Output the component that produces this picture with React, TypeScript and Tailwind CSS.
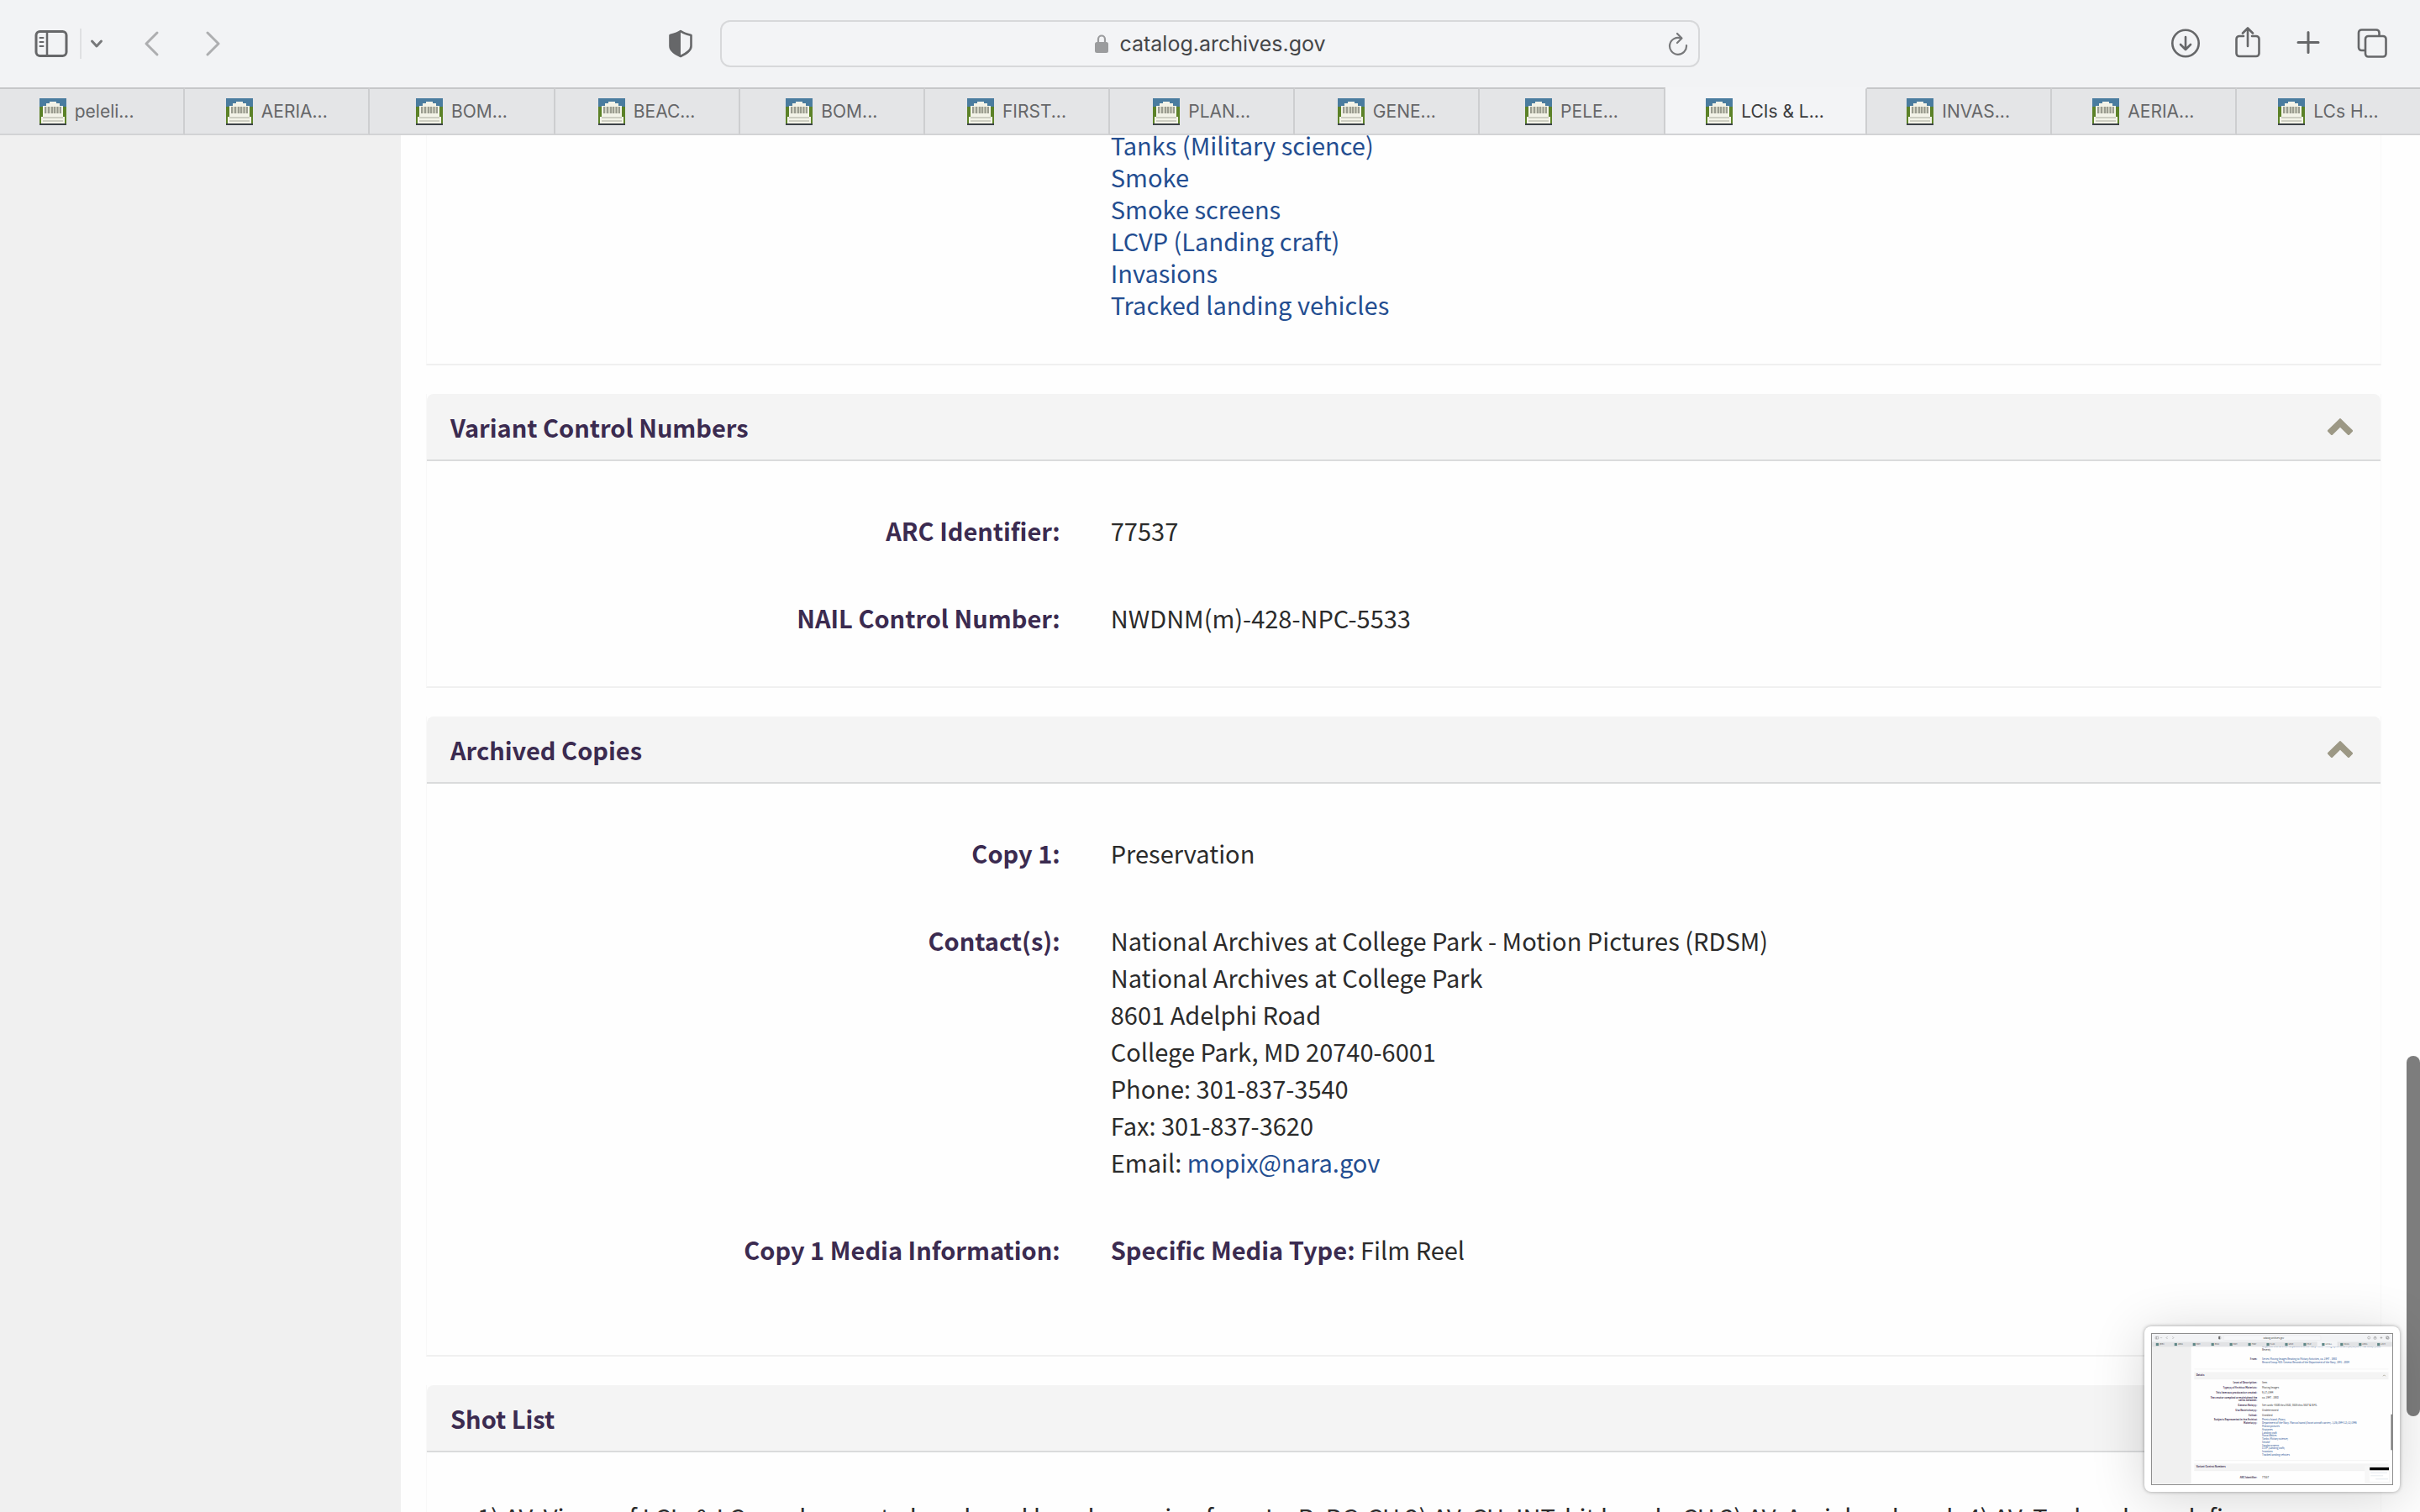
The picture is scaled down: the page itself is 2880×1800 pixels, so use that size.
import type { ReactNode } from 'react';
import { useState } from 'react';
import clsx from 'clsx';

const TABS = [
  'peleli...',
  'AERIA...',
  'BOM...',
  'BEAC...',
  'BOM...',
  'FIRST...',
  'PLAN...',
  'GENE...',
  'PELE...',
  'LCIs & L...',
  'INVAS...',
  'AERIA...',
  'LCs H...',
];

const SUBJECTS = [
  'Tanks (Military science)',
  'Smoke',
  'Smoke screens',
  'LCVP (Landing craft)',
  'Invasions',
  'Tracked landing vehicles',
];

const CONTACT = [
  'National Archives at College Park - Motion Pictures (RDSM)',
  'National Archives at College Park',
  '8601 Adelphi Road',
  'College Park, MD 20740-6001',
  'Phone: 301-837-3540',
  'Fax: 301-837-3620',
];

export default function App() {
  return (
    <div className="relative flex h-screen flex-col overflow-hidden bg-[#fefefe]">
      <header className="z-10 shrink-0 font-[Inter,sans-serif]">
        <Toolbar />
        <TabStrip />
      </header>
      <div className="flex min-h-0 flex-1 overflow-hidden">
        <aside className="w-[477px] shrink-0 bg-[#f0f0f0]" />
        <RecordPage />
        <Scrollbar />
      </div>
      <ScreenshotPreview />
    </div>
  );
}

function Toolbar() {
  return (
    <div className="grid h-[104px] grid-cols-[1fr_40.5%_1fr] items-center bg-[#f2f3f5] text-[#666769]">
      <div className="flex items-center pr-8 pl-[41px]">
        <button type="button" aria-label="Show sidebar">
          <svg className="h-8 w-10" viewBox="0 0 40 32" fill="none" stroke="currentColor">
            <rect x="2" y="1.500" width="36" height="29" rx="4.500" strokeWidth="3" />
            <path d="M15 2v28" strokeWidth="2.500" />
            <path d="M6.500 9h4M6.500 14h4M6.500 19h4" strokeWidth="2" strokeLinecap="round" />
          </svg>
        </button>
        <span className="ml-3.5 h-9 w-0.5 bg-[#dfe0e2]" />
        <button type="button" aria-label="Tab groups" className="ml-2.5">
          <svg className="h-4 w-4" viewBox="0 0 16 16" fill="none" stroke="#77787a" strokeWidth="3" strokeLinecap="round" strokeLinejoin="round">
            <path d="M2.500 5 8 11l5.500-6" />
          </svg>
        </button>
        <button type="button" aria-label="Back" className="ml-12">
          <svg className="h-8 w-5" viewBox="0 0 20 32" fill="none" stroke="#adaeb0" strokeWidth="3" strokeLinecap="round" strokeLinejoin="round">
            <path d="M16 3 3 16l13 13" />
          </svg>
        </button>
        <button type="button" aria-label="Forward" className="ml-[52px]">
          <svg className="h-8 w-5" viewBox="0 0 20 32" fill="none" stroke="#adaeb0" strokeWidth="3" strokeLinecap="round" strokeLinejoin="round">
            <path d="m4 3 13 13L4 29" />
          </svg>
        </button>
        <button type="button" aria-label="Privacy report" className="ml-auto">
          <svg className="h-[34px] w-[30px]" viewBox="0 0 30 34">
            <path
              d="M15 2C11 5 6.500 6 2.500 7v13c0 5.500 6.500 9 12.500 12 6-3 12.500-6.500 12.500-12V7C23.500 6 19 5 15 2Z"
              fill="none"
              stroke="currentColor"
              strokeWidth="2.600"
              strokeLinejoin="round"
            />
            <path d="M15 2C11 5 6.500 6 2.500 7v13c0 5.500 6.500 9 12.500 12Z" fill="currentColor" />
          </svg>
        </button>
      </div>

      <div className="relative flex h-14 items-center justify-center gap-3 rounded-xl border-2 border-[#d7d8da] bg-[#f3f4f6]">
        <svg className="h-6 w-[18px]" viewBox="0 0 18 24">
          <path d="M5 11V6.500a4 4 0 0 1 8 0V11" fill="none" stroke="#9b9c9e" strokeWidth="2.200" />
          <rect x="1" y="10" width="16" height="13" rx="2.500" fill="#9b9c9e" />
        </svg>
        <input
          type="text"
          aria-label="Address"
          defaultValue="catalog.archives.gov"
          className="field-sizing-content bg-transparent text-[25px] leading-8 text-[#454648] outline-none"
        />
        <button type="button" aria-label="Reload" className="absolute right-3">
          <svg className="h-7 w-6" viewBox="0 0 24 28" fill="none" stroke="#77787a" strokeWidth="2.200" strokeLinecap="round" strokeLinejoin="round">
            <path d="M15.500 7.500A10 10 0 1 0 22 16" />
            <path d="m11 2 5.500 5.500L11 13" />
          </svg>
        </button>
      </div>

      <div className="flex items-center justify-end pr-[39px]">
        <button type="button" aria-label="Downloads">
          <svg className="h-9 w-9" viewBox="0 0 36 36" fill="none" stroke="currentColor" strokeWidth="2.600" strokeLinecap="round" strokeLinejoin="round">
            <circle cx="18" cy="17.500" r="15.700" />
            <path d="M18 10v15M12 19l6 6 6-6" />
          </svg>
        </button>
        <button type="button" aria-label="Share" className="ml-10">
          <svg className="h-10 w-8" viewBox="0 0 32 40" fill="none" stroke="currentColor" strokeWidth="2.600" strokeLinecap="round" strokeLinejoin="round">
            <path d="M11 11H6a3.500 3.500 0 0 0-3.500 3.500v17A3.500 3.500 0 0 0 6 35h20a3.500 3.500 0 0 0 3.500-3.500v-17A3.500 3.500 0 0 0 26 11h-5" />
            <path d="M16 23V1.500M10 7.500l6-6 6 6" />
          </svg>
        </button>
        <button type="button" aria-label="New tab" className="ml-10">
          <svg className="h-8 w-8" viewBox="0 0 32 32" fill="none" stroke="currentColor" strokeWidth="3" strokeLinecap="round">
            <path d="M16 2.500v24M4 14.500h24" />
          </svg>
        </button>
        <button type="button" aria-label="Tab overview" className="ml-[42px]">
          <svg className="h-9 w-9" viewBox="0 0 36 36" fill="none" stroke="currentColor" strokeWidth="2.600" strokeLinejoin="round">
            <path d="M9.500 26h-4a3.500 3.500 0 0 1-3.500-3.500V5A3.500 3.500 0 0 1 5.500 1.500H23A3.500 3.500 0 0 1 26.500 5v4" />
            <rect x="10" y="9" width="24.500" height="24.500" rx="3.500" />
          </svg>
        </button>
      </div>
    </div>
  );
}

function TabStrip() {
  const [active, setActive] = useState(9);

  return (
    <div role="tablist" className="flex h-[57px]">
      {TABS.map((title, i) => (
        <button
          key={i}
          type="button"
          role="tab"
          aria-selected={i === active}
          onClick={() => setActive(i)}
          className={clsx(
            'flex min-w-0 basis-0 items-center justify-center gap-2.5 border-y-2 border-b-[#d2d3d5] text-[21px] leading-7',
            i < TABS.length - 1 && 'border-r-2 border-r-[#cdced0]',
            i === active
              ? 'grow-[240] border-t-[#f3f4f6] bg-[#f3f4f6] text-[#3a3b3d]'
              : 'grow-[220] border-t-[#c6c7c9] bg-[#e4e5e7] text-[#666769]',
          )}
        >
          <Favicon />
          <span className={clsx('whitespace-nowrap', i === 0 && 'mr-3')}>{title}</span>
        </button>
      ))}
    </div>
  );
}

/** Columned building on a lawn. */
function Favicon() {
  return (
    <svg className="h-8 w-8 shrink-0" viewBox="0 0 32 32">
      <rect width="32" height="32" fill="#4a7c9f" />
      <rect y="10" width="32" height="20" fill="#5c8228" />
      <rect y="30" width="32" height="2" fill="#3c4248" />
      <path d="M4 22V9h4V6h4V4h8v2h4v3h4v13h2v8H2v-8Z" fill="#f3f3e8" />
      <path d="M6 10h20v8H6Z" fill="#d5d6c6" />
      <path d="M7 10v8M11 10v8M15 10v8M18 10v8M21.500 10v8M25 10v8" stroke="#95978a" strokeWidth="1.800" />
      <path d="M4 23h24M4 27h24" stroke="#cdcec2" strokeWidth="1.800" />
    </svg>
  );
}

function RecordPage() {
  return (
    <main className="-mt-2 min-w-0 flex-1 overflow-hidden pl-[30px] font-['Noto_Sans_CJK_JP','Noto_Sans_CJK_SC',sans-serif] text-[29px] leading-[44px] text-[#2b2b2b]">
      <section className="mb-[34px] border-x border-b-2 border-x-[#f8f8f8] border-b-[#f0f0f0] pb-13">
        <ul className="ml-[35%] leading-[38px]">
          {SUBJECTS.map((subject) => (
            <li key={subject}>
              <a href="#" className="text-[#234d90]">
                {subject}
              </a>
            </li>
          ))}
        </ul>
      </section>

      <Panel title="Variant Control Numbers">
        <Fields>
          <Field label="ARC Identifier:">77537</Field>
          <Field label="NAIL Control Number:">NWDNM(m)-428-NPC-5533</Field>
        </Fields>
      </Panel>

      <Panel title="Archived Copies">
        <Fields>
          <Field label="Copy 1:">Preservation</Field>
          <Field label="Contact(s):">
            {CONTACT.map((line) => (
              <p key={line}>{line}</p>
            ))}
            <p>
              Email:{' '}
              <a href="mailto:mopix@nara.gov" className="text-[#234d90]">
                mopix@nara.gov
              </a>
            </p>
          </Field>
          <Field label="Copy 1 Media Information:">
            <p className="pb-11">
              <span className="font-bold text-[#3b2b50]">Specific Media Type:</span> Film Reel
            </p>
          </Field>
        </Fields>
      </Panel>

      <Panel title="Shot List">
        <p className="px-[60px] leading-8">
          1) AV, Views of LCIs &amp; LCs underway to beach and beach, moving from L - R. BG-CU 2) AV, CU, INT, hit beach, CU 3)
          AV, Aerial on beach 4) AV, Tanks, shore defi
        </p>
      </Panel>
    </main>
  );
}

function Panel({ title, children }: { title: string; children: ReactNode }) {
  const [open, setOpen] = useState(true);

  return (
    <section className="mb-[34px] border-x border-b-2 border-x-[#f8f8f8] border-b-[#f0f0f0]">
      <h2 className="rounded-t-lg border-b-2 border-[#dadbdc] bg-[#f4f4f4]">
        <button
          type="button"
          aria-expanded={open}
          onClick={() => setOpen(!open)}
          className="flex h-[78px] w-full items-center justify-between pr-8 pl-7 font-bold text-[#3b2b50]"
        >
          {title}
          <svg className={clsx('h-5 w-8', !open && 'rotate-180')} viewBox="0 0 32 20">
            <path
              d="M14.900.7a1.500 1.500 0 0 1 2.200 0l13.400 13.100a1.500 1.500 0 0 1 0 2.200l-3.400 3.400a1.500 1.500 0 0 1-2.200 0L16 10.800l-8.900 8.600a1.500 1.500 0 0 1-2.200 0L1.500 16a1.500 1.500 0 0 1 0-2.200Z"
              fill="#9c9885"
            />
          </svg>
        </button>
      </h2>
      {open && <div className="py-[60px]">{children}</div>}
    </section>
  );
}

function Fields({ children }: { children: ReactNode }) {
  return <dl className="grid grid-cols-[35%_1fr] gap-y-[60px]">{children}</dl>;
}

function Field({ label, children }: { label: string; children: ReactNode }) {
  return (
    <>
      <dt className="pr-[60px] text-right font-bold text-[#3b2b50]">{label}</dt>
      <dd>{children}</dd>
    </>
  );
}

function Scrollbar() {
  return (
    <div className="flex w-[46px] shrink-0 flex-col items-end">
      <div className="grow-[1096]" />
      <div className="w-4 grow-[429] rounded-full bg-[#7d7d7d]" />
      <div className="grow-[114]" />
    </div>
  );
}

const PREVIEW_ROWS: [number, string, string][] = [
  [590, 'Level of Description:', 'Item'],
  [648, 'Type(s) of Archival Materials:', 'Moving Images'],
  [706, 'This item was produced or created:', '9/17/1944'],
  [764, 'The creator compiled or maintained the', 'ca. 1947 - 1980'],
  [802, 'series between:', ''],
  [860, 'General Note(s):', 'See cards "5530 thru 5532, 5535 thru 5537 & 5541.'],
  [918, 'Use Restriction(s):', 'Undetermined'],
  [976, 'Edited:', 'Unedited'],
  [1034, 'Subjects Represented in the Archival', ''],
  [1072, 'Material(s):', ''],
  [1720, 'ARC Identifier:', '77537'],
];

const PREVIEW_SUBJECTS = [
  'Peleliu Island (Palau)',
  'Department of the Navy. Marcus Island (Escort aircraft carrier). 1/26/1944-12/12/1946',
  'Motion pictures',
  'Airplanes',
  'Landing craft',
  'Naval battles',
  ...SUBJECTS,
];

/** Floating thumbnail of the last captured screen, drawn at a tenth of its size. */
function ScreenshotPreview() {
  return (
    <figure className="absolute right-6 bottom-6 w-[304px] rounded-lg bg-white p-2 shadow-[0_0_4px_rgba(0,0,0,0.35),0_8px_64px_rgba(0,0,0,0.16)]">
      <svg
        className="w-full border border-[#8e8e8e] font-['Noto_Sans_CJK_JP',sans-serif]"
        viewBox="0 0 2880 1800"
        fontSize="29"
        fill="#2b2b2b"
      >
        <rect width="2880" height="1800" fill="#fefefe" />
        <rect y="150" width="470" height="1650" fill="#f0f0f0" />
        <g fill="#234d90">
          <text x="1320" y="164">
            Department of Defense. Department of the Navy. Naval Photographic Center. (09/18/1947 - ca. 1998). (Most
          </text>
          <text x="1320" y="310">Series: Moving Images Relating to Military Activities, ca. 1947 - 1980</text>
          <text x="1320" y="352">Record Group 428: General Records of the Department of the Navy, 1941 - 2004</text>
        </g>
        <text x="1320" y="204">Recent)</text>
        <text x="1260" y="310" textAnchor="end" fontWeight="700" fill="#3b2b50">
          From:
        </text>
        <rect width="2880" height="104" fill="#f2f3f5" />
        <rect y="96" width="2880" height="58" fill="#e2e3e5" />
        <rect x="1981" y="90" width="240" height="64" fill="#f3f4f6" />
        {TABS.map((title, i) => (
          <g key={i}>
            <rect x={48 + i * 221} y="110" width="32" height="32" fill="#5d8585" />
            <text x={90 + i * 221} y="135" fontSize="22" fill="#555">
              {title}
            </text>
          </g>
        ))}
        <rect x="857" y="20" width="1166" height="56" rx="12" fill="#f6f7f9" stroke="#dcdddf" strokeWidth="3" />
        <text x="1334" y="58" fontSize="26" fill="#333">
          catalog.archives.gov
        </text>
        <g fill="none" stroke="#666769" strokeWidth="4">
          <rect x="42" y="33" width="36" height="28" rx="4" />
          <path d="M56 33v28M104 43l8 8 8-8M186 32l-14 14 14 14M246 32l14 14-14 14M2734 46h28M2748 32v28" />
          <rect x="800" y="30" width="24" height="32" rx="8" />
          <circle cx="2600" cy="46" r="15" />
          <rect x="2660" y="38" width="28" height="24" rx="4" />
          <path d="M2674 50V28" />
          <rect x="2806" y="30" width="26" height="26" rx="4" />
          <rect x="2814" y="36" width="26" height="26" rx="4" />
        </g>
        <rect x="800" y="30" width="14" height="32" fill="#555" />

        <rect x="507" y="457" width="2327" height="84" fill="#f4f4f4" />
        <rect x="507" y="1554" width="2327" height="84" fill="#f4f4f4" />
        <path d="M507 421h2327M507 541h2327M507 1517h2327M507 1638h2327" stroke="#e2e2e2" strokeWidth="3" />
        <g fontWeight="700" fill="#3b2b50">
          <text x="530" y="508">Details</text>
          <text x="530" y="1605">Variant Control Numbers</text>
        </g>
        <path d="m2770 506 14-14 14 14" fill="none" stroke="#9c9885" strokeWidth="8" />
        {PREVIEW_ROWS.map(([y, label, value]) => (
          <g key={y}>
            <text x="1260" y={y + 8} textAnchor="end" fontWeight="700" fill="#3b2b50">
              {label}
            </text>
            <text x="1320" y={y + 8}>
              {value}
            </text>
          </g>
        ))}
        {PREVIEW_SUBJECTS.map((subject, i) => (
          <text key={subject} x="1320" y={1042 + i * 38} fill="#234d90">
            {subject}
          </text>
        ))}
        <rect x="2864" y="964" width="16" height="429" fill="#7d7d7d" />
        <rect x="2550" y="1580" width="304" height="210" fill="#f7f7f7" />
        <rect x="2610" y="1600" width="230" height="170" fill="#fff" />
        <rect x="2610" y="1600" width="230" height="34" fill="#000" />
        <path d="M2620 1665h200M2620 1700h150M2680 1740h150" stroke="#d3dbe4" strokeWidth="6" />
      </svg>
    </figure>
  );
}
